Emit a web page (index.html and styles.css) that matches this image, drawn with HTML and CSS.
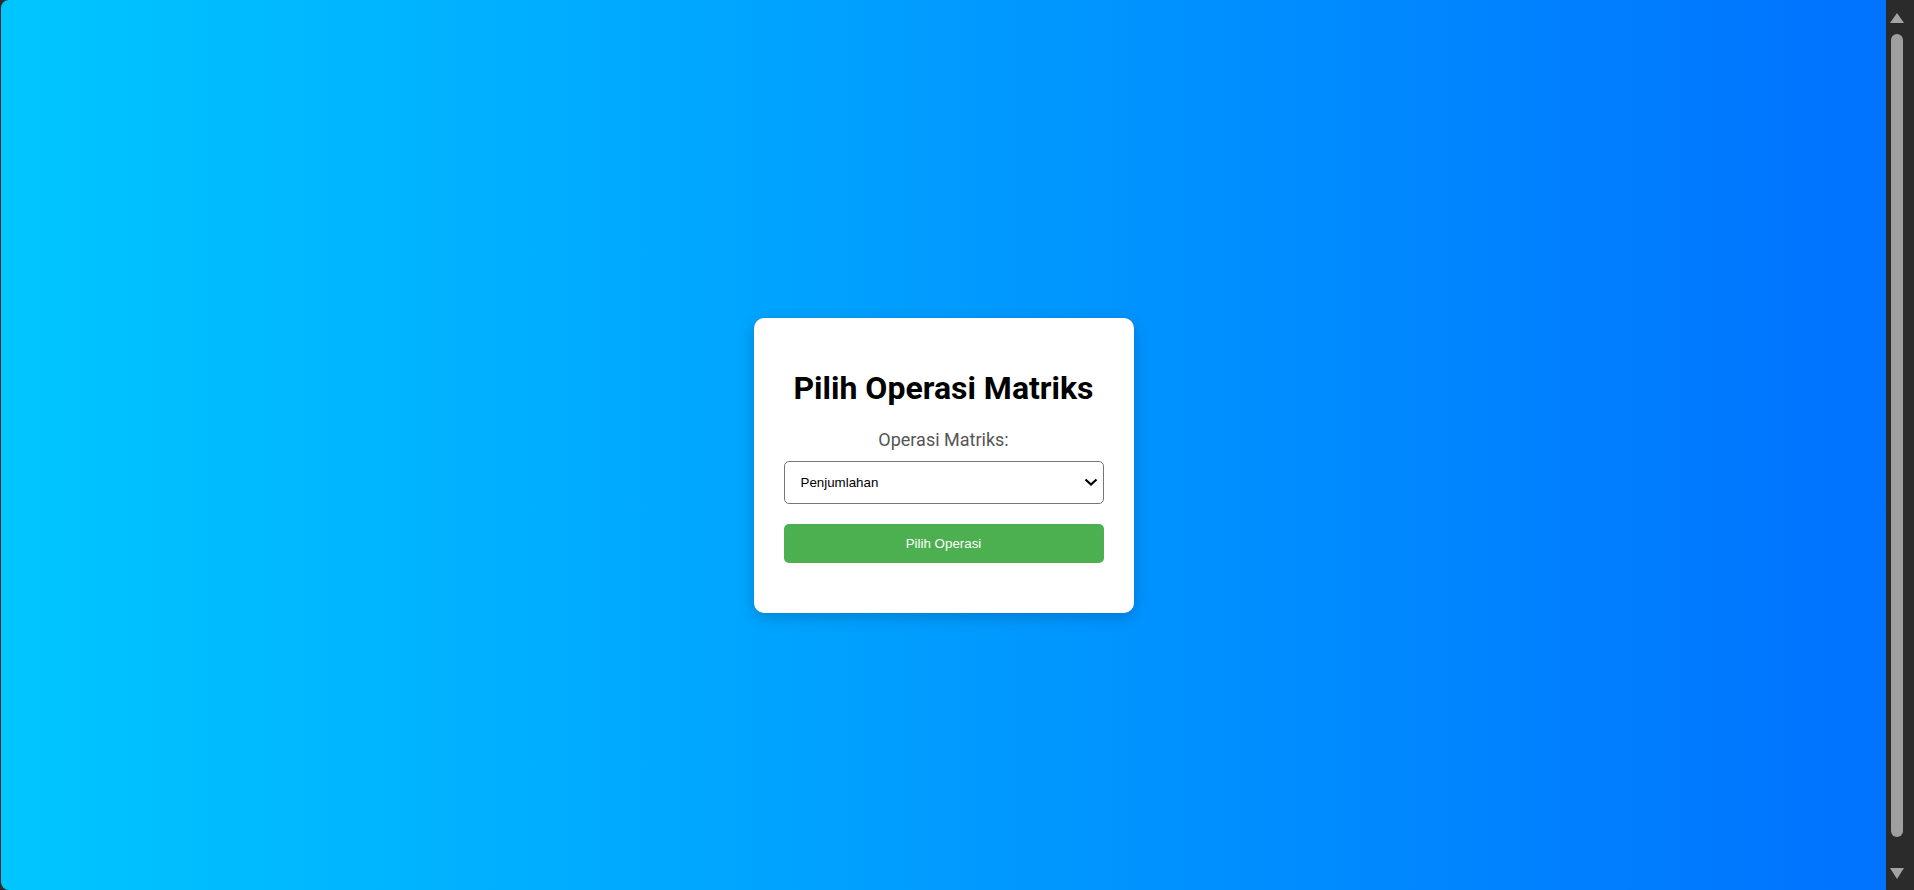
FILE: index.html
```html
<!DOCTYPE html>
<html lang="id">
<head>
<meta charset="utf-8">
<title>Pilih Operasi Matriks</title>
<link rel="stylesheet" href="styles.css">
</head>
<body>
<div class="frame">
  <div class="viewport">
    <div class="page">
      <div class="card">
        <h1 class="title">Pilih Operasi Matriks</h1>
        <form class="form">
          <label class="label" for="operasi">Operasi Matriks:</label>
          <div class="select-wrap">
            <select class="select" id="operasi" name="operasi">
              <option>Penjumlahan</option>
              <option>Pengurangan</option>
              <option>Perkalian</option>
            </select>
            <svg class="chevron" width="16" height="10" viewBox="0 0 16 10"><path d="M2.5 2.5 L8 7.5 L13.5 2.5" fill="none" stroke="#000" stroke-width="2.2"/></svg>
          </div>
          <button class="button" type="button">Pilih Operasi</button>
        </form>
      </div>
    </div>
  </div>
  <div class="scrollbar">
    <svg class="arrow-up" width="14" height="10" viewBox="0 0 14 10"><path d="M7 0 L14 10 L0 10 Z" fill="#a3a3a3"/></svg>
    <div class="track"><div class="thumb"></div></div>
    <svg class="arrow-down" width="14" height="11" viewBox="0 0 14 11"><path d="M0 0 L14 0 L7 11 Z" fill="#a3a3a3"/></svg>
  </div>
</div>
</body>
</html>
```
FILE: styles.css
```css
html, body {
  margin: 0;
  padding: 0;
  height: 100%;
  overflow: hidden;
}
body {
  background: #2b2b2b;
  font-family: Roboto, "Liberation Sans", Arial, sans-serif;
}
.frame {
  display: flex;
  height: 100vh;
}
.viewport {
  flex: 1;
  margin-left: 1px;
  border-radius: 8px 0 0 8px;
  overflow: hidden;
  background: linear-gradient(to right, #00c6ff, #0072ff);
}
.page {
  min-height: 100vh;
  padding: 20px;
  display: flex;
  align-items: center;
  justify-content: center;
}
.card {
  width: 320px;
  padding: 30px;
  background: #fff;
  border-radius: 10px;
  box-shadow: 0 4px 15px rgba(0, 0, 0, 0.2);
  text-align: center;
}
.title {
  margin: 21px 0 22px;
  font-size: 32px;
  font-weight: 700;
  color: #000;
}
.form {
  display: flex;
  flex-direction: column;
  margin-bottom: 20px;
}
.label {
  font-size: 18px;
  color: #555;
  margin-bottom: 11px;
}
.select-wrap {
  position: relative;
  margin-bottom: 20px;
}
.select {
  display: block;
  width: 100%;
  height: 43px;
  padding: 0 30px 0 16px;
  -webkit-appearance: none;
  appearance: none;
  font-family: Arial, "Liberation Sans", sans-serif;
  font-size: 13.333px;
  color: #000;
  background: #fff;
  border: 1px solid #767676;
  border-radius: 5px;
}
.chevron {
  position: absolute;
  right: 5px;
  top: 16px;
  pointer-events: none;
}
.button {
  height: 39px;
  padding: 0;
  border: none;
  border-radius: 5px;
  background: #4caf50;
  color: #fff;
  font-family: Arial, "Liberation Sans", sans-serif;
  font-size: 13.333px;
}
.scrollbar {
  width: 28px;
  box-sizing: border-box;
  padding-left: 4px;
  display: flex;
  flex-direction: column;
  background: #2b2b2b;
}
.arrow-up {
  margin-top: 13px;
  display: block;
}
.track {
  flex: 1;
  padding-left: 1px;
  padding-top: 11px;
}
.thumb {
  width: 12px;
  height: 803px;
  border-radius: 6px;
  background: #9f9f9f;
}
.arrow-down {
  display: block;
  margin-top: 4px;
  margin-bottom: 11px;
}
```
